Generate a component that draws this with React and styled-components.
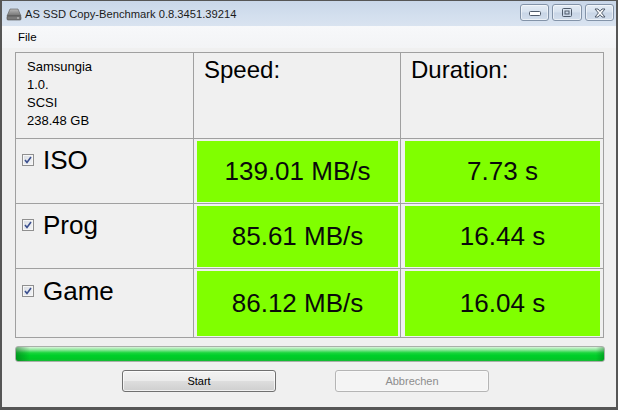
import React from 'react'
import styled, { createGlobalStyle } from 'styled-components'

const GlobalStyle = createGlobalStyle`
  html, body { margin: 0; padding: 0; background: #f0f0f0; }
  * { box-sizing: border-box; }
`

const Window = styled.div`
  width: 618px;
  height: 410px;
  display: flex;
  flex-direction: column;
  background: #f0f0f0;
  border: 1px solid #565656;
  border-width: 1px 2px 3px 2px;
  font-family: "Liberation Sans", Arial, sans-serif;
  overflow: hidden;
`

const TitleBar = styled.div`
  height: 25px;
  display: flex;
  align-items: center;
  padding: 0 2px 0 4px;
  background: linear-gradient(to bottom, #c9d7e9 0%, #d3dfee 60%, #d9e3f0 100%);
`

const AppIcon = styled.svg`
  width: 16px;
  height: 16px;
  flex: none;
`

const Title = styled.span`
  margin-left: 3px;
  font-size: 11.2px;
  color: #1b1b1b;
  flex: 1;
  white-space: nowrap;
`

const CaptionButtons = styled.div`
  display: flex;
  gap: 3px;
  align-self: flex-start;
  margin-top: 3px;
`

const CaptionButton = styled.div`
  width: ${p => p.$w || 29}px;
  height: 17px;
  border: 1px solid #8393a8;
  border-radius: 3px;
  background: linear-gradient(to bottom, #e4ecf5 0%, #d6e1ee 48%, #c8d5e6 52%, #d3deec 100%);
  box-shadow: inset 0 0 0 1px rgba(255,255,255,0.55);
  display: flex;
  align-items: center;
  justify-content: center;
`

const MenuBar = styled.div`
  height: 22px;
  display: flex;
  align-items: center;
  padding-left: 16px;
  background: linear-gradient(to bottom, #f7f8fa 0%, #f3f4f6 100%);
  font-size: 11.5px;
  color: #000;
`

const Body = styled.div`
  flex: 1;
  display: flex;
  flex-direction: column;
  padding: 4px 11px 0 13px;
`

const Grid = styled.div`
  display: grid;
  grid-template-columns: 177px 206px 202px;
  grid-template-rows: 85px 64px 64px 68px;
  gap: 1px;
  width: max-content;
  background: #a0a0a0;
  border: 1px solid #a0a0a0;
`

const Cell = styled.div`
  background: #f0f0f0;
  padding: ${p => p.$pad || '0'};
  display: flex;
  flex-direction: ${p => (p.$column ? 'column' : 'row')};
  align-items: ${p => (p.$column ? 'stretch' : 'flex-start')};
`

const InfoLine = styled.div`
  font-size: 13px;
  line-height: 18px;
  color: #000;
`

const HeadText = styled.div`
  font-size: 24px;
  line-height: 28px;
  color: #000;
`

const LabelRow = styled.div`
  display: flex;
  align-items: center;
  height: 30px;
`

const Check = styled.div`
  width: 12px;
  height: 12px;
  border: 1px solid #8f8f8f;
  background: linear-gradient(135deg, #d9dde3 0%, #f4f5f7 100%);
  box-shadow: inset 0 0 0 1px #f6f6f6;
  display: flex;
  align-items: center;
  justify-content: center;
  flex: none;
`

const RowLabel = styled.span`
  margin-left: 9px;
  font-size: 26px;
  line-height: 30px;
  color: #000;
`

const Result = styled.div`
  flex: 1;
  align-self: stretch;
  background: #80ff00;
  display: flex;
  align-items: center;
  justify-content: center;
  font-size: 26px;
  color: #0a0a0a;
`

const Progress = styled.div`
  margin-top: 8px;
  width: 590px;
  height: 16px;
  border: 1px solid #a9b0a9;
  border-radius: 3px;
  overflow: hidden;
  background:
    linear-gradient(to right, rgba(0, 90, 20, 0.45) 0px, rgba(0, 90, 20, 0) 14px),
    linear-gradient(to left, rgba(0, 90, 20, 0.35) 0px, rgba(0, 90, 20, 0) 8px),
    linear-gradient(to bottom, #d8f6da 0%, #8fe79c 20%, #1ad53c 42%, #00cf2a 60%, #00c826 85%, #19b936 100%);
`

const ButtonRow = styled.div`
  margin-top: 8px;
  display: flex;
  gap: 59px;
  padding-left: 107px;
`

const Button = styled.div`
  width: 154px;
  height: 22px;
  border: 1px solid ${p => (p.$disabled ? '#b5b5b5' : '#707070')};
  border-radius: 3px;
  background: ${p =>
    p.$disabled
      ? '#f4f4f4'
      : 'linear-gradient(to bottom, #f2f2f2 0%, #ebebeb 48%, #dddddd 52%, #cfcfcf 100%)'};
  box-shadow: inset 0 0 0 1px ${p => (p.$disabled ? '#f8f8f8' : 'rgba(255,255,255,0.7)')};
  display: flex;
  align-items: center;
  justify-content: center;
  font-size: 11px;
  color: ${p => (p.$disabled ? '#8d8d8d' : '#000')};
`

const CheckMark = () => (
  <svg width="8" height="8" viewBox="0 0 8 8">
    <path d="M1 4 L3 6.5 L7 1" fill="none" stroke="#3b4f8e" strokeWidth="1.6" />
  </svg>
)

const rows = [
  { name: 'ISO', speed: '139.01 MB/s', time: '7.73 s', pad: '6px 2px 2px 6px' },
  { name: 'Prog', speed: '85.61 MB/s', time: '16.44 s', pad: '6px 2px 2px 6px' },
  { name: 'Game', speed: '86.12 MB/s', time: '16.04 s', pad: '7px 2px 2px 6px' },
]

export default function App() {
  return (
    <>
      <GlobalStyle />
      <Window>
        <TitleBar>
          <AppIcon viewBox="0 0 16 16">
            <defs>
              <linearGradient id="hd" x1="0" y1="0" x2="0" y2="1">
                <stop offset="0" stopColor="#b9b9b9" />
                <stop offset="1" stopColor="#6f6f6f" />
              </linearGradient>
            </defs>
            <path d="M4 3 L12 3 L15 10 L1 10 Z" fill="url(#hd)" stroke="#5a5a5a" strokeWidth="0.6" />
            <rect x="1" y="10" width="14" height="4" rx="1" fill="#7a7a7a" stroke="#4a4a4a" strokeWidth="0.6" />
            <rect x="11" y="11.5" width="2" height="1" fill="#cfcfcf" />
          </AppIcon>
          <Title>AS SSD Copy-Benchmark 0.8.3451.39214</Title>
          <CaptionButtons>
            <CaptionButton>
              <svg width="12" height="6" viewBox="0 0 12 6">
                <rect x="0.5" y="1.5" width="11" height="4" rx="1" fill="#fff" stroke="#4e5a6a" />
              </svg>
            </CaptionButton>
            <CaptionButton $w={30}>
              <svg width="10" height="9" viewBox="0 0 10 9">
                <rect x="0.5" y="0.5" width="9" height="8" rx="1" fill="none" stroke="#4e5a6a" />
                <rect x="3" y="3" width="4" height="3" fill="none" stroke="#4e5a6a" />
              </svg>
            </CaptionButton>
            <CaptionButton>
              <svg width="14" height="10" viewBox="0 0 14 10">
                <path d="M2 1 L5 1 L7 3.3 L9 1 L12 1 L8.6 5 L12 9 L9 9 L7 6.7 L5 9 L2 9 L5.4 5 Z" fill="#fff" stroke="#4e5a6a" strokeWidth="1" strokeLinejoin="round" />
              </svg>
            </CaptionButton>
          </CaptionButtons>
        </TitleBar>
        <MenuBar>File</MenuBar>
        <Body>
          <Grid>
            <Cell $column $pad="5px 0 0 11px">
              <InfoLine>Samsungia</InfoLine>
              <InfoLine>1.0.</InfoLine>
              <InfoLine>SCSI</InfoLine>
              <InfoLine>238.48 GB</InfoLine>
            </Cell>
            <Cell $pad="3px 0 0 10px">
              <HeadText>Speed:</HeadText>
            </Cell>
            <Cell $pad="3px 0 0 10px">
              <HeadText>Duration:</HeadText>
            </Cell>
            {rows.map(r => (
              <React.Fragment key={r.name}>
                <Cell $pad={r.pad}>
                  <LabelRow>
                    <Check>
                      <CheckMark />
                    </Check>
                    <RowLabel>{r.name}</RowLabel>
                  </LabelRow>
                </Cell>
                <Cell $pad="2px 2px 1px 3px">
                  <Result>{r.speed}</Result>
                </Cell>
                <Cell $pad="2px 3px 1px 4px">
                  <Result>{r.time}</Result>
                </Cell>
              </React.Fragment>
            ))}
          </Grid>
          <Progress />
          <ButtonRow>
            <Button>Start</Button>
            <Button $disabled>Abbrechen</Button>
          </ButtonRow>
        </Body>
      </Window>
    </>
  )
}
